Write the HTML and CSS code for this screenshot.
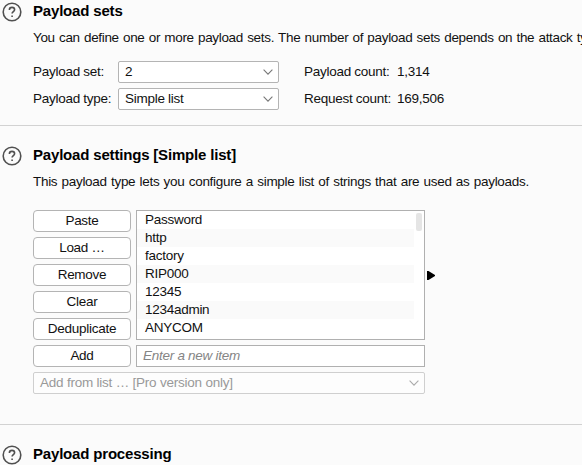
FILE: index.html
```html
<!DOCTYPE html>
<html lang="en">
<head>
<meta charset="utf-8">
<title>Payloads</title>
<link rel="stylesheet" href="styles.css">
</head>
<body>
<svg class="defs" width="0" height="0">
  <symbol id="help" viewBox="0 0 20 20"><circle cx="10" cy="10" r="8.8"/><path d="M7.4 7.9C7.4 6.3 8.5 5.4 10 5.4s2.6 1 2.6 2.4c0 1.9-2.5 1.9-2.5 3.8"/><path d="M10.1 13.4v1.5"/></symbol>
  <symbol id="chevron" viewBox="0 0 10 6"><path d="M.6.7 5 5.1 9.4.7"/></symbol>
</svg>
<section class="panel sets">
  <svg class="help"><use href="#help"/></svg>
  <div class="body">
    <h2>Payload sets</h2>
    <p>You can define one or more payload sets. The number of payload sets depends on the attack type</p>
    <div class="config">
      <label>Payload set:</label>
      <div class="select"><span>2</span><svg class="chevron"><use href="#chevron"/></svg></div>
      <span class="key">Payload count:</span><span>1,314</span>
      <label>Payload type:</label>
      <div class="select"><span>Simple list</span><svg class="chevron"><use href="#chevron"/></svg></div>
      <span class="key">Request count:</span><span>169,506</span>
    </div>
  </div>
</section>
<section class="panel settings">
  <svg class="help"><use href="#help"/></svg>
  <div class="body">
    <h2>Payload settings [Simple list]</h2>
    <p>This payload type lets you configure a simple list of strings that are used as payloads.</p>
    <div class="editor">
      <div class="buttons">
        <div class="button">Paste</div>
        <div class="button">Load …</div>
        <div class="button">Remove</div>
        <div class="button">Clear</div>
        <div class="button">Deduplicate</div>
        <div class="button">Add</div>
      </div>
      <div class="entries">
        <div class="list">
          <ul>
            <li>Password</li><li>http</li><li>factory</li><li>RIP000</li><li>12345</li><li>1234admin</li><li>ANYCOM</li>
          </ul>
          <div class="thumb"></div>
        </div>
        <div class="input">Enter a new item</div>
      </div>
      <svg class="arrow" viewBox="0 0 8 9"><path d="M0 0h1.5L8 4v1L1.5 9H0z"/></svg>
    </div>
    <div class="select disabled"><span>Add from list … [Pro version only]</span><svg class="chevron"><use href="#chevron"/></svg></div>
  </div>
</section>
<section class="panel processing">
  <svg class="help"><use href="#help"/></svg>
  <div class="body"><h2>Payload processing</h2></div>
</section>
</body>
</html>
```
FILE: styles.css
```css
* { box-sizing: border-box; }
body {
  margin: 0;
  height: 465px;
  overflow: hidden;
  background: #fbfbfb;
  color: #111;
  font: 13.5px/16px "Liberation Sans", Arial, sans-serif;
  letter-spacing: -0.27px;
  white-space: nowrap;
}
.defs { display: block; }
.panel { display: flex; padding-left: 2px; }
.sets { height: 126px; padding-top: 2px; border-bottom: 1px solid #d2d2d2; }
.settings { height: 299px; padding-top: 20px; border-bottom: 1px solid #d2d2d2; }
.processing { padding-top: 20px; }
.help {
  flex: none;
  width: 20px;
  height: 20px;
  margin: 0.4px 10.6px 0 0.4px;
  fill: none;
  stroke: #505050;
  stroke-width: 1.6;
}
h2 { margin: 0; font-size: 15px; line-height: 18px; letter-spacing: -0.18px; color: #000; }
p { margin: 10px 0 0; letter-spacing: -0.3px; word-spacing: 0.8px; }
.sets p { letter-spacing: -0.33px; }
.config {
  display: grid;
  grid-template-columns: 85px 161px 118px auto;
  grid-auto-rows: 22px;
  row-gap: 5px;
  align-items: center;
  margin-top: 15px;
}
.key { margin-left: 25px; }
.select {
  display: flex;
  align-items: center;
  justify-content: space-between;
  height: 22px;
  padding: 0 5px 0 6px;
  border: 1px solid #b4b4b4;
  border-radius: 2px;
  background: #fff;
}
.chevron { width: 10px; height: 6px; fill: none; stroke: #777; stroke-width: 1.1; }
.editor { display: flex; margin-top: 20px; }
.buttons { display: grid; gap: 5px; width: 98px; margin-right: 5px; }
.button {
  height: 22px;
  border: 1px solid #b4b4b4;
  border-radius: 4px;
  background: #fff;
  line-height: 20px;
  text-align: center;
}
.entries { width: 289px; }
.list {
  display: flex;
  justify-content: space-between;
  height: 130px;
  padding-right: 2px;
  border: 1px solid #b0b0b0;
  background: #fff;
}
ul { flex: none; width: 277px; margin: 0; padding: 0; list-style: none; }
li { height: 18px; padding-left: 8px; line-height: 18px; }
li:nth-child(even) { background: #fafafa; }
.thumb { width: 6px; height: 18px; margin-top: 2px; border-radius: 2px; background: #e5e5e5; }
.input {
  height: 22px;
  margin-top: 5px;
  padding-left: 6px;
  border: 1px solid #b0b0b0;
  background: #fff;
  color: #858585;
  font-style: italic;
  line-height: 20px;
}
.arrow { width: 8px; height: 9px; margin: 61px 0 0 2px; }
.disabled { width: 392px; margin-top: 5px; border-color: #cfcfcf; color: #999; background: #fdfdfd; letter-spacing: -0.22px; }
.disabled .chevron { stroke: #aaa; }
```
